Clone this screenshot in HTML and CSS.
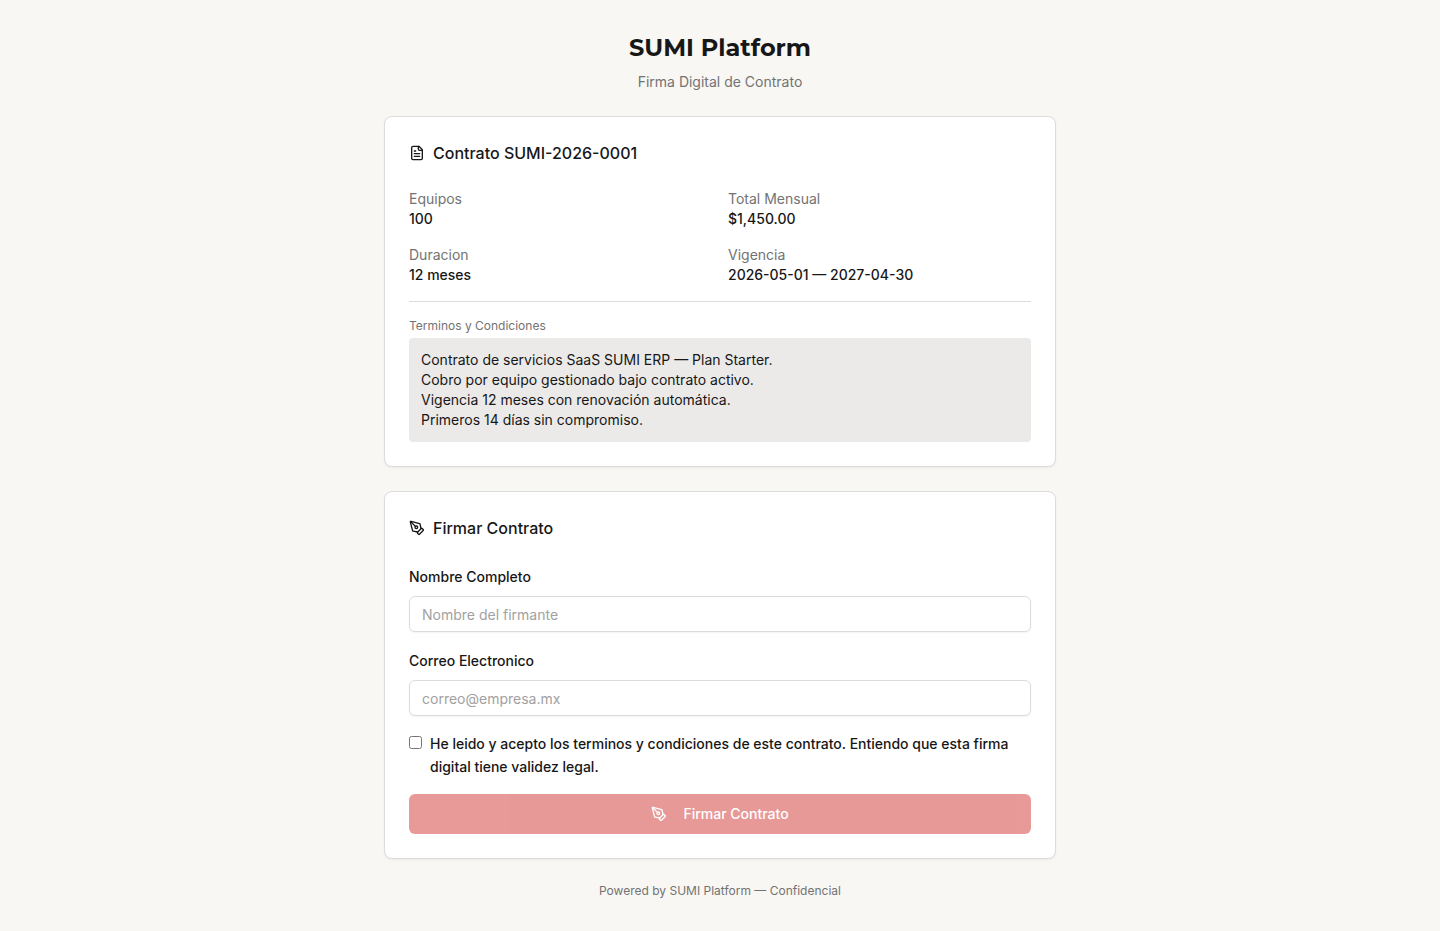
FILE: index.html
```html
<!DOCTYPE html>
<html lang="es">

<head>
    <meta charset="UTF-8">
    <meta name="viewport" content="width=device-width, initial-scale=1.0">
    <title>Firma Digital de Contrato</title>
    <link rel="stylesheet" href="styles.css">
</head>

<body>
    <div class="container">
        <header class="header">
            <h1>SUMI Platform</h1>
            <p>Firma Digital de Contrato</p>
        </header>

        <section class="card">
            <h2 class="card-title">
                <svg class="icon" viewBox="0 0 24 24" aria-hidden="true">
                    <path d="M15 2H6a2 2 0 0 0-2 2v16a2 2 0 0 0 2 2h12a2 2 0 0 0 2-2V7Z" />
                    <path d="M14 2v4a2 2 0 0 0 2 2h4" />
                    <path d="M10 9H8" />
                    <path d="M16 13H8" />
                    <path d="M16 17H8" />
                </svg>
                Contrato SUMI-2026-0001
            </h2>
            <dl class="details">
                <div>
                    <dt>Equipos</dt>
                    <dd>100</dd>
                </div>
                <div>
                    <dt>Total Mensual</dt>
                    <dd>$1,450.00</dd>
                </div>
                <div>
                    <dt>Duracion</dt>
                    <dd>12 meses</dd>
                </div>
                <div>
                    <dt>Vigencia</dt>
                    <dd>2026-05-01 — 2027-04-30</dd>
                </div>
            </dl>
            <div class="terms">
                <p class="terms-label">Terminos y Condiciones</p>
                <div class="terms-box">
                    Contrato de servicios SaaS SUMI ERP — Plan Starter.<br>
                    Cobro por equipo gestionado bajo contrato activo.<br>
                    Vigencia 12 meses con renovación automática.<br>
                    Primeros 14 días sin compromiso.
                </div>
            </div>
        </section>

        <section class="card">
            <h2 class="card-title">
                <svg class="icon" viewBox="0 0 24 24" aria-hidden="true">
                    <path d="M15.707 21.293a1 1 0 0 1-1.414 0l-1.586-1.586a1 1 0 0 1 0-1.414l5.586-5.586a1 1 0 0 1 1.414 0l1.586 1.586a1 1 0 0 1 0 1.414z" />
                    <path d="m18 13-1.375-6.874a1 1 0 0 0-.746-.776L3.235 2.028a1 1 0 0 0-1.207 1.207L5.35 15.879a1 1 0 0 0 .776.746L13 18" />
                    <path d="m2.3 2.3 7.286 7.286" />
                    <circle cx="11" cy="11" r="2" />
                </svg>
                Firmar Contrato
            </h2>
            <form class="form">
                <div class="form-group">
                    <label for="nombre">Nombre Completo</label>
                    <input type="text" id="nombre" name="nombre" placeholder="Nombre del firmante">
                </div>
                <div class="form-group">
                    <label for="correo">Correo Electronico</label>
                    <input type="email" id="correo" name="correo" placeholder="correo@empresa.mx">
                </div>
                <div class="form-check">
                    <input type="checkbox" id="acepto" name="acepto">
                    <label for="acepto">He leido y acepto los terminos y condiciones de este contrato. Entiendo que esta firma digital tiene validez legal.</label>
                </div>
                <button type="submit" class="btn" disabled>
                    <svg class="icon" viewBox="0 0 24 24" aria-hidden="true">
                        <path d="M15.707 21.293a1 1 0 0 1-1.414 0l-1.586-1.586a1 1 0 0 1 0-1.414l5.586-5.586a1 1 0 0 1 1.414 0l1.586 1.586a1 1 0 0 1 0 1.414z" />
                        <path d="m18 13-1.375-6.874a1 1 0 0 0-.746-.776L3.235 2.028a1 1 0 0 0-1.207 1.207L5.35 15.879a1 1 0 0 0 .776.746L13 18" />
                        <path d="m2.3 2.3 7.286 7.286" />
                        <circle cx="11" cy="11" r="2" />
                    </svg>
                    Firmar Contrato
                </button>
            </form>
        </section>

        <footer class="footer">Powered by SUMI Platform — Confidencial</footer>
    </div>
</body>

</html>
```
FILE: styles.css
```css
* {
    box-sizing: border-box;
    margin: 0;
    padding: 0;
}

body {
    font-family: Inter, "Liberation Sans", sans-serif;
    font-size: 14px;
    line-height: 20px;
    color: #171717;
    background-color: #f8f7f3;
}

.container {
    display: flex;
    flex-direction: column;
    gap: 24px;
    max-width: 672px;
    margin: 0 auto;
    padding: 32px 0;
}

.header {
    text-align: center;
}

.header h1 {
    font-family: Montserrat, Inter, sans-serif;
    font-size: 24px;
    font-weight: 700;
    line-height: 32px;
    margin-bottom: 8px;
}

.header p {
    color: #737373;
}

.card {
    background-color: #fff;
    border: 1px solid #dcdcda;
    border-radius: 8px;
    padding: 24px;
    box-shadow: 0 1px 2px rgba(0, 0, 0, 0.06);
}

.card-title {
    display: flex;
    align-items: center;
    gap: 8px;
    font-size: 16px;
    font-weight: 500;
    line-height: 24px;
    margin-bottom: 24px;
}

.icon {
    width: 16px;
    height: 16px;
    flex-shrink: 0;
    fill: none;
    stroke: currentColor;
    stroke-width: 2;
    stroke-linecap: round;
    stroke-linejoin: round;
}

.details {
    display: grid;
    grid-template-columns: 1fr 1fr;
    gap: 16px;
}

.details dt {
    color: #737373;
}

.details dd {
    font-weight: 500;
}

.terms {
    margin-top: 16px;
    padding-top: 16px;
    border-top: 1px solid #dcdcda;
}

.terms-label {
    font-size: 12px;
    line-height: 16px;
    color: #737373;
    margin-bottom: 4px;
}

.terms-box {
    padding: 12px;
    background-color: #ebeae9;
    border-radius: 4px;
}

.form {
    display: flex;
    flex-direction: column;
    gap: 16px;
}

.form-group label {
    display: block;
    font-weight: 500;
    line-height: 26px;
    margin-bottom: 6px;
}

.form-group input {
    display: block;
    width: 100%;
    height: 36px;
    padding: 4px 12px;
    font: inherit;
    color: inherit;
    background-color: #fff;
    border: 1px solid #dcdcda;
    border-radius: 6px;
    box-shadow: 0 1px 2px rgba(0, 0, 0, 0.05);
}

.form-group input::placeholder {
    color: #a1a1a1;
}

.form-check {
    display: flex;
    align-items: flex-start;
    gap: 8px;
}

.form-check input {
    width: 13px;
    height: 13px;
    margin-top: 4px;
    flex-shrink: 0;
}

.form-check label {
    font-weight: 500;
    line-height: 23px;
}

.btn {
    display: flex;
    align-items: center;
    justify-content: center;
    gap: 16px;
    width: 100%;
    height: 40px;
    font: inherit;
    font-weight: 500;
    color: #fff;
    background-color: #d03532;
    border: none;
    border-radius: 6px;
    cursor: pointer;
}

.btn:disabled {
    opacity: 0.5;
    cursor: default;
}

.footer {
    font-size: 12px;
    line-height: 16px;
    text-align: center;
    color: #737373;
}
```
